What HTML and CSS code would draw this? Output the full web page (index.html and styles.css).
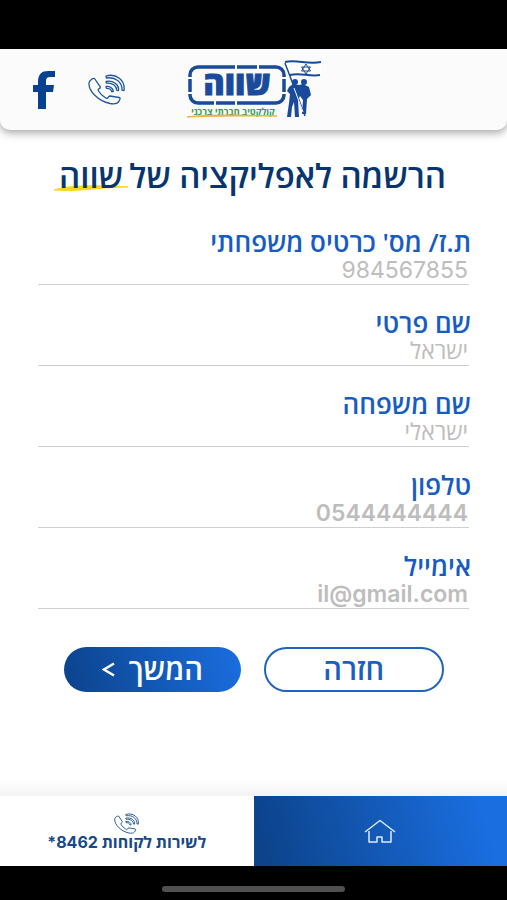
FILE: index.html
```html
<!DOCTYPE html>
<html lang="he" dir="rtl">
<head>
<meta charset="utf-8">
<meta name="viewport" content="width=device-width, initial-scale=1">
<title>הרשמה לאפליקציה של שווה</title>
<link rel="stylesheet" href="styles.css">
</head>
<body>
<svg class="defs" aria-hidden="true">
  <symbol id="phone" viewBox="0 0 37 31">
    <g fill="none" stroke="currentColor" stroke-linecap="round" stroke-linejoin="round">
      <path d="M6.500 4.500C5 4 1.500 6 1 9c-.5 8 9 18 21 20.500 4 .7 7 .5 8.500-1.500l1.500-3c.3-.8 0-1.300-1-1.500l-9-1.500c-1 0-1.500.7-2 1.800-.8.900-1.800.5-3-.3-3-2-5-4-6.500-6.500-.8-1.500 0-2 .8-2.400 1-.5 1.200-1.200.8-2z"/>
      <path d="M18 2C28-1 37.500 6 36 16.500l-2-.3C34.500 8 27 2.500 18.500 4zM18 7.500c7-1.500 13.500 3 12.500 9l-1.800-.3c.2-4-4.700-8-10.200-7zM18 12.500c4-.5 7.500 2 7.300 5h-1.800c-.2-2-2.500-3.400-5-3.200z"/>
    </g>
  </symbol>
</svg>
<div class="status-bar"></div>
<div class="screen">
  <header class="header">
    <svg class="logo" viewBox="0 0 136 60" role="img" aria-label="שווה">
      <rect x="4" y="7" width="94" height="36" rx="8" fill="none" stroke="#1a4a9c" stroke-width="3.500"/>
      <path d="M50 4v6M50 40v6M1 18h6M1 33h6M95 18h6M95 33h6M29 40v6M72 4v6" stroke="#fff" stroke-width="2"/>
      <text class="logo-name" x="51" y="35">שווה</text>
      <text class="logo-tag" x="47" y="55">קולקטיב חברתי צרכני</text>
      <path d="M1 57c22-3 55-2 90-1-36 0-60 0-90 1z" fill="#efb14b" stroke="#efb14b"/>
      <path d="M99 3l20 53" stroke="#1a4a9c" stroke-width="1.500"/>
      <path d="M100 3c10-4 22 4 35 0v12c-10 3-20-3-30 0z" fill="#fff"/>
      <path d="M99 2c12-3 22 3 36 0M104 15c10-3 19 2 30 0" fill="none" stroke="#1a4a9c" stroke-width="2"/>
      <path d="M120 4l4.500 7h-9zM120 14l-4.500-7h9z" fill="none" stroke="#1a4a9c"/>
      <g fill="#1a4a9c">
        <circle cx="109" cy="22" r="3"/><circle cx="118" cy="22" r="3"/>
        <path d="M103 27l4-3 6 1 4-1 6 3 2 8-4 4-1 15h-4l1-14-3-4-2 4 1 17h-4l-1-15-2 5-1 10h-4l2-14 1-9-3-3z"/>
      </g>
      <path d="M108 28l9 24" stroke="#fff"/>
    </svg>
    <div class="links">
      <a href="#" aria-label="טלפון"><svg class="phone-icon"><use href="#phone"/></svg></a>
      <a href="#" aria-label="פייסבוק">
        <svg class="facebook-icon" viewBox="0 0 22 38"><path d="M5 38V21H0v-7h5v-3C5 3 9 0 15 0h7v6h-4c-4 0-5 1-5 5v3h8l-1 7h-7v17z" fill="#08418f"/></svg>
      </a>
    </div>
  </header>
  <main class="main">
    <h1 class="title">הרשמה לאפליקציה של<span class="brand">שווה<svg class="swash" viewBox="0 0 78 7" preserveAspectRatio="none"><path d="M1 5C16 0 48 0 77 2 48 2 30 7 1 5z" fill="#f9d71c" stroke="#f9d71c"/></svg></span></h1>
    <form class="form">
      <div class="field"><label for="card">ת.ז/ מס' כרטיס משפחתי</label><input id="card" type="text" placeholder="984567855"></div>
      <div class="field"><label for="first">שם פרטי</label><input id="first" type="text" placeholder="ישראל"></div>
      <div class="field"><label for="last">שם משפחה</label><input id="last" type="text" placeholder="ישראלי"></div>
      <div class="field strong"><label for="tel">טלפון</label><input id="tel" type="tel" placeholder="0544444444"></div>
      <div class="field strong"><label for="mail">אימייל</label><input id="mail" type="email" placeholder="il@gmail.com"></div>
      <div class="actions">
        <button class="button back" type="button">חזרה</button>
        <button class="button next" type="submit">המשך<svg class="chevron" viewBox="0 0 13 15"><path d="M12 1.500L2 7.500l10 6" fill="none" stroke="#fff" stroke-width="2.500"/></svg></button>
      </div>
    </form>
  </main>
  <nav class="nav">
    <a class="home" href="#" aria-label="בית">
      <svg class="home-icon" viewBox="0 0 32 24"><path d="M1 13L16 1.500 31 13M5 12v11h8v-5h5v5h9V12" fill="none" stroke="#dcecff" stroke-width="1.500" stroke-linejoin="round"/></svg>
    </a>
    <a class="service" href="#"><svg class="service-icon"><use href="#phone"/></svg><span>לשירות לקוחות 8462*</span></a>
  </nav>
</div>
<div class="system-bar"><div class="indicator"></div></div>
</body>
</html>
```
FILE: styles.css
```css
* { box-sizing: border-box; }
body {
  display: flex;
  flex-direction: column;
  min-height: 100vh;
  margin: 0;
  background: #000;
  font-family: Inter, "Open Sans", "DejaVu Sans", sans-serif;
}
a { color: inherit; text-decoration: none; }
svg { display: block; }
.defs { position: absolute; width: 0; height: 0; }
.status-bar { height: 49px; }
.screen {
  display: flex;
  flex: 1;
  flex-direction: column;
  background: #fff;
}
.header {
  display: grid;
  grid-template-columns: 1fr auto 1fr;
  align-items: center;
  height: 81px;
  padding: 0 33px;
  background: #fbfbfb;
  border-radius: 0 0 10px 10px;
  box-shadow: 0 3px 8px rgba(0, 0, 0, 0.35);
  clip-path: inset(0 0 -16px 0);
  z-index: 1;
}
.logo { grid-column: 2; width: 136px; height: 60px; }
.logo-name {
  font: 800 32px "Open Sans", "DejaVu Sans", sans-serif;
  fill: #1a4a9c;
  stroke: #1a4a9c;
  text-anchor: middle;
}
.logo-tag {
  font: 700 9px "Open Sans", "DejaVu Sans", sans-serif;
  fill: #2f9d58;
  text-anchor: middle;
}
.links {
  display: flex;
  align-items: center;
  justify-content: flex-end;
  gap: 33px;
  color: #1f579f;
}
.phone-icon { width: 37px; height: 31px; stroke-width: 1.3; }
.facebook-icon { width: 22px; height: 38px; }
.main {
  flex: 1;
  padding: 28px 38px 0;
  background: linear-gradient(#fff calc(100% - 16px), #f3f3f3);
}
.title {
  margin: 0 0 34px;
  padding-right: 2px;
  color: #07356f;
  font-size: 33px;
  font-weight: 600;
  line-height: 36px;
  text-align: center;
  white-space: nowrap;
}
.brand { position: relative; margin-right: 6px; z-index: 0; }
.swash {
  position: absolute;
  right: -6px;
  bottom: 4px;
  left: -6px;
  width: calc(100% + 12px);
  height: 7px;
  z-index: -1;
}
.form { display: flex; flex-direction: column; gap: 24px; }
.field { display: flex; flex-direction: column; }
.field label {
  margin-right: -2px;
  color: #165cc3;
  font-family: "Open Sans", "DejaVu Sans", sans-serif;
  font-size: 26px;
  font-weight: 600;
  line-height: 28px;
}
.field input {
  width: 100%;
  height: 29px;
  padding: 0 1px;
  border: 0;
  border-bottom: 1px solid #cfcfcf;
  border-radius: 0;
  background: transparent;
  font-family: inherit;
  font-size: 23px;
  text-align: right;
}
.field input::placeholder { color: #bdbdbd; opacity: 1; }
.strong input { font-weight: 600; }
.actions { display: flex; gap: 23px; padding: 14px 25px 0 26px; }
.button {
  display: flex;
  flex: 1;
  align-items: center;
  justify-content: center;
  gap: 14px;
  height: 45px;
  padding: 0;
  border: 0;
  border-radius: 23px;
  font-family: inherit;
  font-size: 29px;
  font-weight: 600;
  line-height: 32px;
}
.back { border: 2px solid #2063bd; background: #fff; color: #1a5fc0; }
.next { background: linear-gradient(75deg, #0c428b, #1a6ee0); color: #fff; }
.chevron { width: 13px; height: 15px; }
.nav { display: flex; height: 70px; }
.nav a {
  display: flex;
  flex: 1;
  flex-direction: column;
  align-items: center;
  justify-content: center;
}
.home { background: linear-gradient(75deg, #0c438b 5%, #1a6ee0 90%); }
.home-icon { width: 32px; height: 24px; }
.service {
  background: #fff;
  color: #164987;
  font-size: 16px;
  font-weight: 700;
  line-height: 16px;
}
.service-icon { width: 25px; height: 21px; stroke-width: 1.3; }
.system-bar { height: 34px; padding-top: 20px; }
.indicator {
  width: 36%;
  height: 6px;
  margin: 0 auto;
  border-radius: 3px;
  background: #505050;
}
```
